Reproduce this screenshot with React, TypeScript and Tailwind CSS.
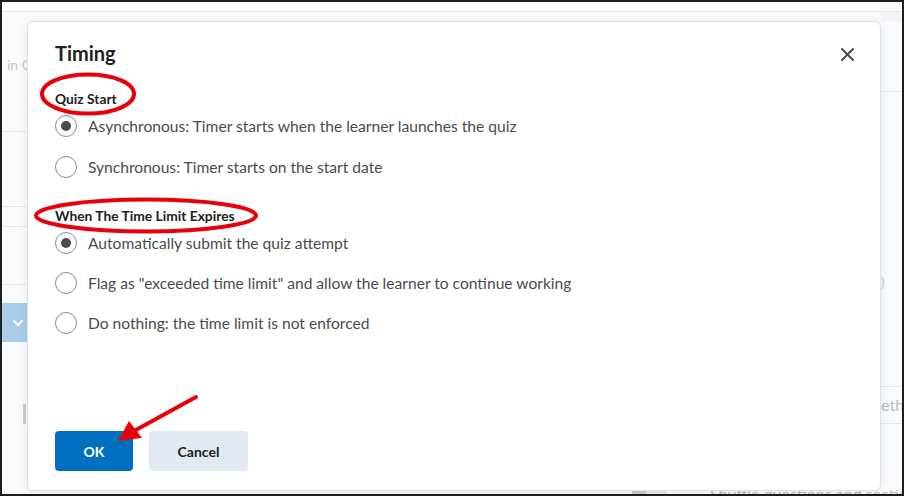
import React from "react";

interface RadioRowProps {
    label: string;
    checked?: boolean;
}

const RadioRow: React.FC<RadioRowProps> = (props) => {
    return (
        <div className="flex flex-row items-center h-[22px]">
            <div className="w-[22px] h-[22px] rounded-full border border-[#868c92] bg-white flex items-center justify-center shrink-0">
                {props.checked && <div className="w-[10px] h-[10px] rounded-full bg-[#494c4e]" />}
            </div>
            <div className="ml-[11px] text-[15.6px] leading-[22px] text-[#494c4e] whitespace-nowrap">{props.label}</div>
        </div>
    );
};

const Backdrop: React.FC = () => {
    return (
        <div className="w-full h-full border-2 border-[#1e1e1e] bg-[#fafbfc] flex flex-col overflow-hidden">
            <div className="h-[10px] bg-[#fcfdfd] border-b border-[#e7e9ec] shrink-0" />
            <div className="flex flex-row flex-1 min-h-0">
                {/* left strip of the page behind the dialog */}
                <div className="w-[25px] flex flex-col shrink-0">
                    <div className="h-[43px]" />
                    <div className="h-[20px] pl-[5px] text-[14px] leading-[20px] text-[#c3c7cb] whitespace-nowrap overflow-hidden">in C</div>
                    <div className="h-[57px] border-b border-[#e3e6e9]" />
                    <div className="h-[75px] border-b border-[#e3e6e9]" />
                    <div className="h-[20px] border-b border-[#e3e6e9]" />
                    <div className="h-[58px] border-b border-[#e3e6e9]" />
                    <div className="h-[18px]" />
                    <div className="h-[39px] bg-[#a9cde9] flex items-center justify-end pr-[3px]">
                        <svg width="12" height="8" viewBox="0 0 12 8">
                            <path d="M2 2 L6 6 L10 2" fill="none" stroke="#ffffff" strokeWidth="2" strokeLinecap="round" strokeLinejoin="round" />
                        </svg>
                    </div>
                    <div className="h-[82px] flex items-end justify-end pr-[1px]">
                        <div className="w-[3px] h-[20px] bg-[#c9cdd1]" />
                    </div>
                </div>
                <div className="flex-1" />
                {/* right strip */}
                <div className="w-[21px] flex flex-col shrink-0">
                    <div className="h-[10px] bg-[#f2f4f6]" />
                    <div className="h-[70px] border-b border-[#e3e6e9]" />
                    <div className="h-[198px] flex items-end text-[13px] text-[#c3c7cb] leading-[16px]">)</div>
                    <div className="h-[97px] border-b border-[#e3e6e9]" />
                    <div className="h-[37px] border-b border-[#e3e6e9] flex items-center text-[16px] text-[#b9bdc2] whitespace-nowrap overflow-hidden">eth</div>
                </div>
            </div>
            <div className="h-[4px] flex flex-row shrink-0 overflow-hidden">
                <div className="w-[630px] shrink-0" />
                <div className="w-[14px] bg-[#c9cdd1] shrink-0" />
                <div className="w-[20px] bg-[#e5e8eb] shrink-0" />
                <div className="w-[44px] shrink-0" />
                <div className="text-[16px] leading-[8px] text-[#b9bdc2] whitespace-nowrap">Shuttle questions and sectio</div>
            </div>
        </div>
    );
};

const App: React.FC = () => {
    return (
        <div className="relative w-[904px] h-[496px] overflow-hidden font-['Lato','Liberation_Sans',sans-serif]">
            <Backdrop />

            {/* dialog */}
            <div className="absolute left-[27px] top-[21px] w-[854px] h-[470px] bg-white rounded-[6px] border border-[#dde1e6] shadow-[0_2px_12px_rgba(0,0,0,0.08)] flex flex-col pl-[27px] pr-[27px]">
                <div className="flex flex-row items-center h-[26px] mt-[18px]">
                    <div className="text-[20px] font-bold text-[#202122] leading-[26px]">Timing</div>
                    <div className="ml-auto mr-[-1px] mt-[3px]">
                        <svg width="13" height="13" viewBox="0 0 13 13">
                            <path d="M1 1 L12 12 M12 1 L1 12" stroke="#494c4e" strokeWidth="2" strokeLinecap="round" />
                        </svg>
                    </div>
                </div>

                <div className="mt-[24px] text-[13.8px] font-bold text-[#202122] leading-[18px]">Quiz Start</div>
                <div className="flex flex-col gap-[19px] mt-[7px]">
                    <RadioRow label="Asynchronous: Timer starts when the learner launches the quiz" checked />
                    <RadioRow label="Synchronous: Timer starts on the start date" />
                </div>

                <div className="mt-[29px] text-[13.8px] font-bold text-[#202122] leading-[18px]">When The Time Limit Expires</div>
                <div className="flex flex-col gap-[18px] mt-[7px]">
                    <RadioRow label="Automatically submit the quiz attempt" checked />
                    <RadioRow label={'Flag as "exceeded time limit" and allow the learner to continue working'} />
                    <RadioRow label="Do nothing: the time limit is not enforced" />
                </div>

                <div className="flex flex-row gap-[16px] mt-auto mb-[19px]">
                    <button className="w-[78px] h-[40px] rounded-[4px] bg-[#006fbf] text-white text-[14px] font-bold">OK</button>
                    <button className="w-[99px] h-[40px] rounded-[4px] bg-[#e3e9f1] text-[#202122] text-[14px] font-bold">Cancel</button>
                </div>
            </div>

            {/* red annotations drawn over the screenshot */}
            <svg className="absolute left-0 top-0 pointer-events-none" width="904" height="496" viewBox="0 0 904 496">
                <ellipse cx="88" cy="94" rx="46" ry="19.5" fill="none" stroke="#e8000b" strokeWidth="4" />
                <ellipse cx="146" cy="215.5" rx="110" ry="16" fill="none" stroke="#e8000b" strokeWidth="4" />
                <line x1="196" y1="397" x2="134" y2="431" stroke="#e8000b" strokeWidth="4" strokeLinecap="round" />
                <polygon points="118,441 129,421 142,438" fill="#e8000b" />
            </svg>
        </div>
    );
};

export default App;
